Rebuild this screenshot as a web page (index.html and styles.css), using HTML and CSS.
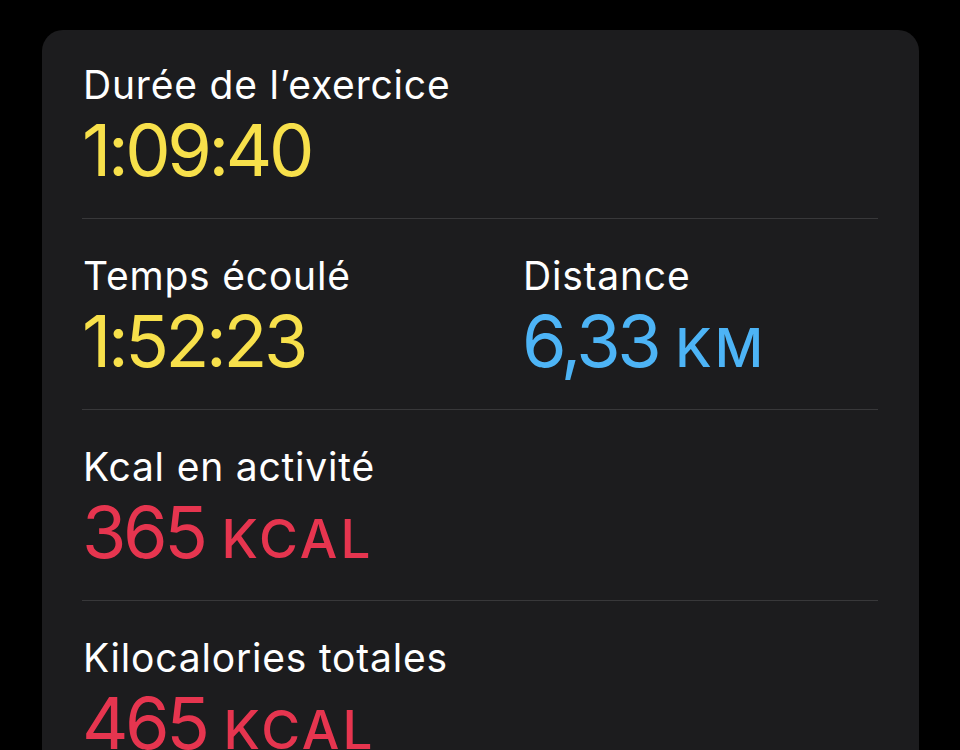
FILE: index.html
```html
<!DOCTYPE html>
<html lang="fr">
<head>
    <meta charset="UTF-8">
    <meta name="viewport" content="width=device-width, initial-scale=1.0">
    <title>Résumé de l'entraînement</title>
    <link rel="stylesheet" href="styles.css">
</head>
<body>
    <div class="carte">
        <div class="section">
            <div class="stat">
                <div class="libelle">Durée de l’exercice</div>
                <div class="valeur jaune">1:09:40</div>
            </div>
        </div>

        <div class="section deux-colonnes">
            <div class="stat">
                <div class="libelle">Temps écoulé</div>
                <div class="valeur jaune">1:52:23</div>
            </div>
            <div class="stat">
                <div class="libelle">Distance</div>
                <div class="valeur bleu">6,33 <span class="unite">KM</span></div>
            </div>
        </div>

        <div class="section">
            <div class="stat">
                <div class="libelle">Kcal en activité</div>
                <div class="valeur rouge">365 <span class="unite">KCAL</span></div>
            </div>
        </div>

        <div class="section">
            <div class="stat">
                <div class="libelle">Kilocalories totales</div>
                <div class="valeur rouge">465 <span class="unite">KCAL</span></div>
            </div>
        </div>
    </div>
</body>
</html>
```

FILE: styles.css
```css
/* Fond général */
body {
    margin: 0;
    background-color: #000;
    font-family: Inter, "Noto Sans", sans-serif;
    color: #fff;
    overflow: hidden;
}

/* Carte du résumé */
.carte {
    margin: 30px 41px 0 42px;
    padding: 0 41px 0 40px;
    background-color: #1c1c1e;
    border-radius: 21px;
}

.section {
    padding: 34px 0 26px 0;
    border-top: 1px solid #38383a;
}

.section:first-child {
    padding-top: 32px;
    border-top: none;
}

.deux-colonnes {
    display: grid;
    grid-template-columns: 440px 1fr;
}

.libelle {
    font-size: 39px;
    line-height: 46px;
    letter-spacing: 0.8px;
    padding-left: 1px;
}

.valeur {
    font-size: 72px;
    line-height: 84px;
    letter-spacing: -3.4px;
}

.unite {
    font-size: 53px;
    line-height: 1;
    font-weight: 500;
    letter-spacing: 3px;
}

.jaune {
    color: #f7e04b;
}

.bleu {
    color: #4db4f6;
}

.rouge {
    color: #e6354f;
}
```
